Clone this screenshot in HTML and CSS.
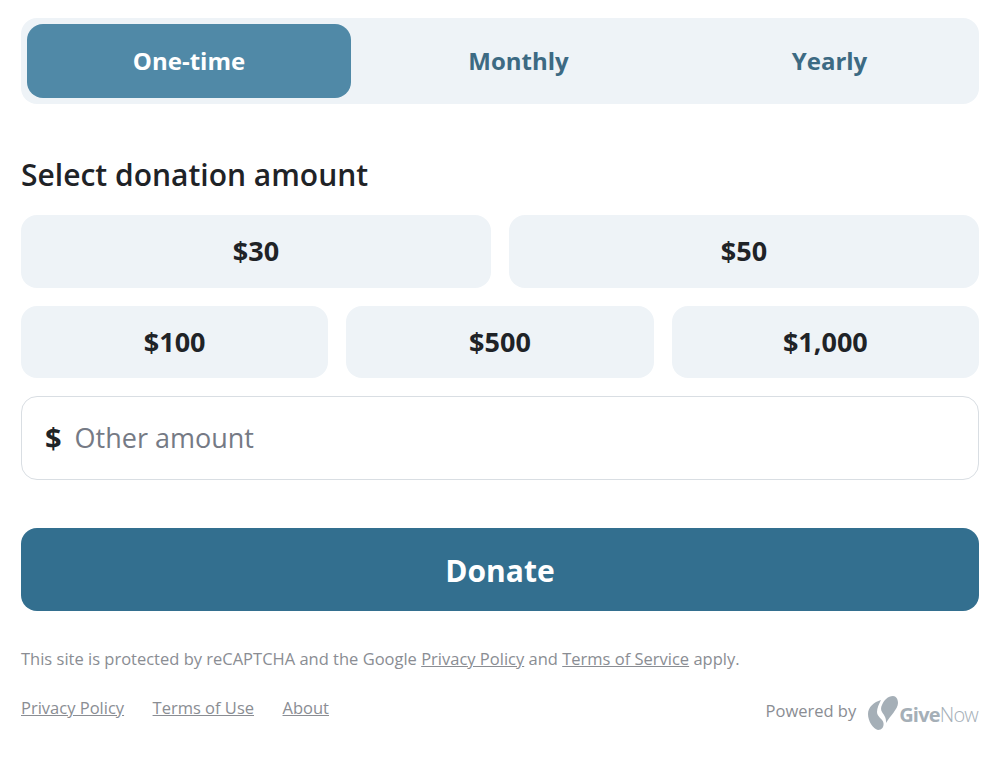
FILE: index.html
```html
<!DOCTYPE html>
<html lang="en">
<head>
<meta charset="utf-8">
<title>Donate</title>
<link rel="stylesheet" href="styles.css">
</head>
<body>
<main class="form">
  <div class="tabs">
    <button class="tab active">One-time</button>
    <button class="tab">Monthly</button>
    <button class="tab">Yearly</button>
  </div>
  <h2 class="title">Select donation amount</h2>
  <div class="row">
    <button class="amount">$30</button>
    <button class="amount">$50</button>
  </div>
  <div class="row">
    <button class="amount">$100</button>
    <button class="amount">$500</button>
    <button class="amount">$1,000</button>
  </div>
  <div class="other"><span class="cur">$</span><span class="ph">Other amount</span></div>
  <button class="donate">Donate</button>
  <p class="legal">This site is protected by reCAPTCHA and the Google <a href="#">Privacy Policy</a> and <a href="#">Terms of Service</a> apply.</p>
  <footer class="foot">
    <nav class="links"><a href="#">Privacy Policy</a><a href="#">Terms of Use</a><a href="#">About</a></nav>
    <div class="powered">
      <span class="label">Powered by</span>
      <svg class="mark" width="30" height="34" viewBox="0 0 30 34"><path fill="#a5afb7" d="M13 4C6 6 0 11 0 18C0 25 5 33 10 34C14 34 16 31 15.500 27C15 23 9 21 9 16C9 12 11 8 13 4Z"/><path fill="#a5afb7" d="M14 9C16 4 20 0 25 0C28 0 30 3 30 7C30 13 22 20 18 27C18.500 22 16 19 14 16C12.500 13.500 13 11 14 9Z"/></svg>
      <span class="brand"><b>Give</b>Now</span>
    </div>
  </footer>
</main>
</body>
</html>
```
FILE: styles.css
```css
* { box-sizing: border-box; }
html, body { margin: 0; background: #fff; }
body { font-family: "Open Sans", sans-serif; color: #1f2327; }
button { font-family: inherit; border: 0; cursor: pointer; }
.form { width: 1000px; height: 760px; padding: 18px 21px 0; }
.tabs { display: grid; grid-template-columns: 324px 335px 1fr; height: 86px; padding: 6px; background: #eef3f7; border-radius: 16px; }
.tab { padding: 0 0 2px; background: transparent; color: #3c6a83; font-size: 24px; font-weight: 700; border-radius: 16px; }
.tab.active { background: #5089a7; color: #fff; }
.title { margin: 52px 0 0; height: 38px; font-size: 30px; line-height: 38px; font-weight: 600; }
.row { display: flex; gap: 18px; margin-top: 18px; }
.title + .row { margin-top: 21px; }
.amount { flex: 1 1 0; height: 73px; padding: 0 0 2px; background: #eef3f7; color: #1f2327; font-size: 27px; font-weight: 700; border-radius: 16px; }
.row + .row .amount { height: 72px; padding: 0 0 2px; }
.other { display: flex; align-items: center; gap: 13px; height: 84px; margin-top: 18px; padding: 0 23px 2px; border: 1px solid #d9dee3; border-radius: 16px; }
.cur { font-size: 29px; font-weight: 700; }
.ph { font-size: 27px; color: #757a85; }
.donate { display: block; width: 100%; height: 83px; margin-top: 48px; padding: 1px 0 0; background: #336f8f; color: #fff; font-size: 30px; font-weight: 700; border-radius: 16px; }
.legal { margin: 37px 0 0; font-size: 16.5px; line-height: 22px; color: #8a8d93; }
.legal a, .links a { color: inherit; text-decoration: underline; }
.foot { display: flex; justify-content: space-between; align-items: flex-start; margin-top: 27px; font-size: 16.5px; color: #8a8d93; }
.links { display: flex; gap: 28.5px; line-height: 22px; }
.powered { display: flex; align-items: center; margin-top: -1px; }
.label { margin-bottom: 6px; }
.mark { margin-left: 12px; margin-right: 1px; }
.brand { margin-top: 3px; margin-right: 1px; font-size: 20px; color: #a5afb7; letter-spacing: -0.8px; font-weight: 300; }
.brand b { font-weight: 700; }
```
